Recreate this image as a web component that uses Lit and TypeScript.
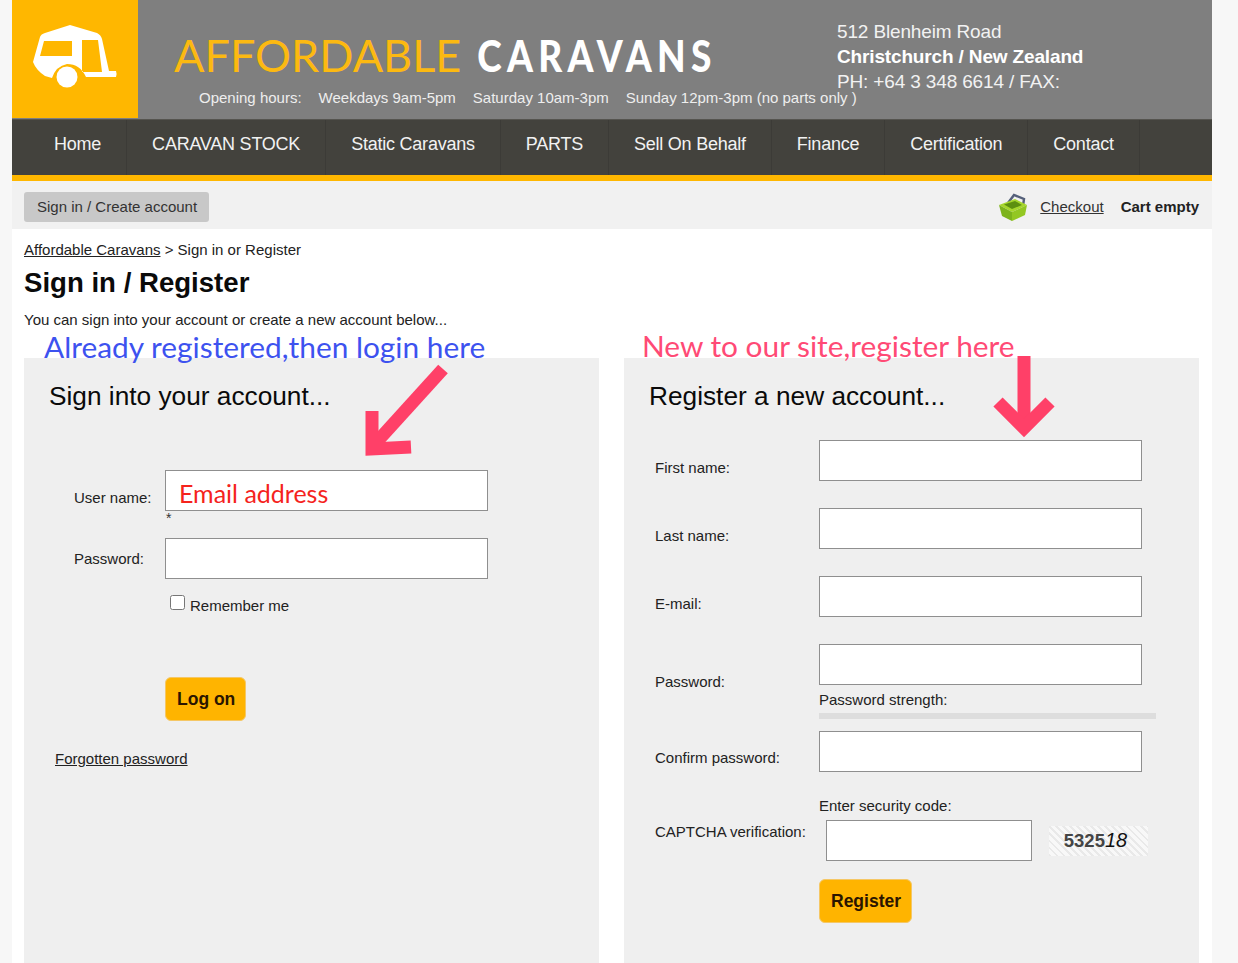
import { LitElement, html, css } from "lit";
import { customElement } from "lit/decorators.js";

const NAV = ["Home", "CARAVAN STOCK", "Static Caravans", "PARTS", "Sell On Behalf", "Finance", "Certification", "Contact"];

@customElement("app-root")
export class AppRoot extends LitElement {
  static styles = css`
    :host { display: block; height: 963px; overflow: hidden; background: #f7f7f7; font-family: "Liberation Sans", Arial, sans-serif; color: #222; font-size: 15px; }
    * { box-sizing: border-box; }
    .wrap { position: relative; width: 1200px; height: 963px; margin-left: 12px; background: #fff; overflow: hidden; }
    .head { display: flex; height: 119px; background: #7f7f7f; }
    .logo { flex: none; width: 126px; height: 118px; background: #ffb700; }
    .logo svg { display: block; }
    .headmain { display: grid; grid-template-columns: 699px 1fr; grid-template-rows: 88px 31px; flex: 1; }
    .brand { grid-column: 1; grid-row: 1; display: flex; align-items: baseline; padding: 31px 0 0 36px; font-family: Lato, sans-serif; font-size: 45px; line-height: 48px; color: #fcb911; white-space: nowrap; }
    .brand b { display: inline-block; margin-left: 16px; color: #fff; font-weight: 900; font-size: 37px; letter-spacing: 5.3px; transform: scaleY(1.18); transform-origin: 0 80%; }
    .addr { grid-column: 2; grid-row: 1 / 3; padding-top: 19px; font-size: 19px; line-height: 25px; color: #f2f2f2; letter-spacing: -0.15px; white-space: nowrap; }
    .addr b { display: block; color: #fff; }
    .hours { grid-column: 1 / 3; grid-row: 2; display: flex; padding: 1px 0 0 61px; font-size: 15px; line-height: 18px; color: #eee; white-space: nowrap; }
    .hours span { margin-right: 17px; }
    .nav { display: flex; height: 56px; padding-left: 17px; background: #43423d; border-top: 1px solid #55544f; }
    .nav a { display: flex; align-items: center; padding: 0 25px 6px 25px; border-right: 1px solid #3c3b37; color: #f2f2f2; font-size: 18px; letter-spacing: -0.23px; white-space: nowrap; }
    .stripe { height: 6px; background: #ffb700; }
    .bar { display: flex; align-items: center; height: 48px; padding: 4px 13px 0 12px; background: #f1f1f1; }
    .signin { padding: 0 12px 0 13px; height: 30px; line-height: 30px; border-radius: 3px; background: #c8c8c8; color: #333; }
    .basket { margin-left: auto; margin-right: 11px; display: block; }
    .bar a { margin-bottom: 2px; color: #333; text-decoration: underline; }
    .bar b { margin: 0 0 2px 17px; color: #222; }
    .content { padding: 0 12px; }
    .crumb { padding-top: 12px; height: 34px; line-height: 18px; color: #222; }
    .crumb a { color: #222; text-decoration: underline; }
    h1 { margin: 0; height: 39px; font-size: 27.6px; line-height: 40px; color: #0a0a0a; }
    .lead { height: 56px; padding-top: 9px; line-height: 18px; }
    .cols { display: flex; gap: 25px; }
    .panel { flex: none; width: 575px; height: 720px; background: #efefef; }
    .panel h2 { margin: 0; padding: 22px 0 0 25px; height: 82px; font-size: 26.25px; font-weight: 400; line-height: 32px; color: #0a0a0a; }
    .left .form { padding: 30px 0 0 50px; }
    .right .form { padding: 0 0 0 31px; }
    .row { display: grid; align-items: center; margin-bottom: 14px; }
    .left .row { grid-template-columns: 91px 323px; min-height: 54px; }
    .left .row.pw { min-height: 41px; margin-bottom: 16px; }
    .right .row { grid-template-columns: 164px 337px; min-height: 54px; }
    .right .row.strength { min-height: 75px; margin-bottom: 12px; }
    .right .row.capwrap { min-height: 67px; }
    label { font-size: 15px; line-height: 18px; color: #222; white-space: nowrap; }
    label.low { padding-top: 2px; }
    label.high { padding-bottom: 2px; }
    .field { align-self: start; }
    .box { display: block; width: 323px; height: 41px; border: 1px solid #8f8f8f; background: #fff; font: inherit; padding: 0 8px; }
    .ast { height: 13px; padding-left: 1px; font-size: 14px; line-height: 14px; color: #333; }
    .remember { display: flex; align-items: center; height: 16px; padding-left: 96px; }
    .remember input { width: 15px; height: 15px; margin: -2px 5px 0 0; }
    .remember label { position: relative; top: 3px; }
    .btn { display: block; height: 44px; border: 1px solid #f5c765; border-radius: 6px; background: #ffb400; color: #2a1500; font: bold 17.5px "Liberation Sans", Arial, sans-serif; padding: 0 10px 0 11px; }
    .logon { margin: 66px 0 0 91px; }
    .forgot { display: block; margin: 29px 0 0 -19px; color: #222; text-decoration: underline; line-height: 18px; }
    .hint { display: block; line-height: 18px; margin-top: 6px; }
    .meter { height: 6px; margin-top: 4px; background: #ddd; }
    .capwrap .field { margin-top: -2px; }
    .capwrap .hint { margin: 0 0 5px; }
    .caprow { display: flex; align-items: center; margin-left: 7px; }
    .capbox { width: 206px; }
    .captcha { display: flex; align-items: center; justify-content: center; width: 99px; height: 30px; margin-left: 17px; padding-right: 6px; color: #444; font: bold 18.5px "Liberation Sans", Arial, sans-serif;
      background-color: #f2f2f2; background-image: repeating-linear-gradient(45deg, #e9e9e9 0 2px, #f8f8f8 2px 5px); }
    .captcha i { font-size: 20px; font-weight: 400; color: #111; }
    .reg { margin: -1px 0 0 164px; }
    .note { position: absolute; font-family: Lato, sans-serif; white-space: nowrap; font-size: 29.85px; line-height: 36px; }
    .n1 { left: 32px; top: 329px; color: #3d52ef; }
    .n2 { left: 630px; top: 328px; color: #ff4a75; }
    .n3 { left: 167px; top: 477px; color: #f5231d; font-size: 25px; line-height: 32px; }
    .arrows { position: absolute; left: 0; top: 0; pointer-events: none; }
  `;

  private textRow(label: string, low = false) {
    return html`<div class="row"><label class=${low ? "low" : ""}>${label}</label><div class="field"><input class="box" /></div></div>`;
  }

  render() {
    return html`
      <div class="wrap">
        <div class="head">
          <div class="logo">
            <svg width="126" height="118" viewBox="0 0 126 118">
              <path fill="#fff" fill-rule="evenodd" d="M58 25 L85 33 Q89 35 90 39 L97 71 L104 71 Q105 73 104 77 L74 77 Q68 64 55 64 Q44 66 40 78 L33 76 Q24 70 21 62 L28 37 Q29 34 33 33 Z M32 41 L60 41 L60 56 L28 56 Z M70 40 L86 40 L90 72 L70 72 Z"/>
              <circle cx="55" cy="77" r="10.5" fill="#fff"/>
            </svg>
          </div>
          <div class="headmain">
            <div class="brand">AFFORDABLE<b>CARAVANS</b></div>
            <div class="addr">512 Blenheim Road<b>Christchurch / New Zealand</b>PH: +64 3 348 6614 / FAX:</div>
            <div class="hours"><span>Opening hours:</span><span>Weekdays 9am-5pm</span><span>Saturday 10am-3pm</span><span>Sunday 12pm-3pm (no parts only )</span></div>
          </div>
        </div>
        <div class="nav">${NAV.map((n) => html`<a>${n}</a>`)}</div>
        <div class="stripe"></div>
        <div class="bar">
          <div class="signin">Sign in / Create account</div>
          <svg class="basket" width="32" height="30" viewBox="0 0 32 30">
            <path d="M11 11 L17 3 L27 7 L26 14" fill="none" stroke="#55607a" stroke-width="2.4"/>
            <path d="M2 13 L18 7 L30 13 L15 20 Z" fill="#a6d62c"/>
            <path d="M7 12.5 L18 9 L25 13 L15 17 Z" fill="#5d8f10"/>
            <path d="M2 13 L15 20 L15 29 L5 24 Z" fill="#7db31c"/>
            <path d="M15 20 L30 13 L28 23 L15 29 Z" fill="#93c722"/>
          </svg>
          <a>Checkout</a>
          <b>Cart empty</b>
        </div>
        <div class="content">
          <div class="crumb"><a>Affordable Caravans</a> &gt; Sign in or Register</div>
          <h1>Sign in / Register</h1>
          <div class="lead">You can sign into your account or create a new account below...</div>
          <div class="cols">
            <div class="panel left">
              <h2>Sign into your account...</h2>
              <div class="form">
                <div class="row"><label class="low">User name:</label><div class="field"><input class="box" /><div class="ast">*</div></div></div>
                <div class="row pw"><label>Password:</label><input class="box" /></div>
                <div class="remember"><input type="checkbox" /><label>Remember me</label></div>
                <button class="btn logon">Log on</button>
                <a class="forgot">Forgotten password</a>
              </div>
            </div>
            <div class="panel right">
              <h2>Register a new account...</h2>
              <div class="form">
                ${this.textRow("First name:", true)}
                ${this.textRow("Last name:", true)}
                ${this.textRow("E-mail:", true)}
                <div class="row strength">
                  <label>Password:</label>
                  <div class="field"><input class="box" /><span class="hint">Password strength:</span><div class="meter"></div></div>
                </div>
                ${this.textRow("Confirm password:")}
                <div class="row capwrap">
                  <label class="high">CAPTCHA verification:</label>
                  <div class="field">
                    <span class="hint">Enter security code:</span>
                    <div class="caprow"><input class="box capbox" /><div class="captcha">5325<i>18</i></div></div>
                  </div>
                </div>
                <button class="btn reg">Register</button>
              </div>
            </div>
          </div>
        </div>
        <div class="note n1">Already registered,then login here</div>
        <div class="note n2">New to our site,register here</div>
        <div class="note n3">Email address</div>
        <svg class="arrows" width="1200" height="963" viewBox="0 0 1200 963" fill="none" stroke="#ff4068" stroke-width="13" stroke-linejoin="miter">
          <path d="M431 369 L362 445"/>
          <path d="M360 411 L360 449 L399 447"/>
          <path d="M1012 356 L1012 428"/>
          <path d="M986 402 L1012 428 L1038 402"/>
        </svg>
      </div>
    `;
  }
}
